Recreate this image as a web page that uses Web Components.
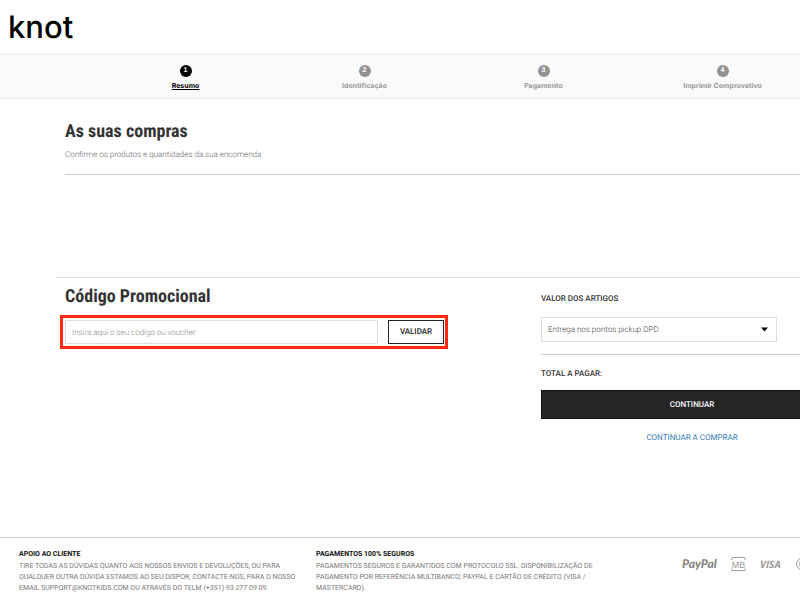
<!DOCTYPE html>
<html lang="pt">
<head>
<meta charset="utf-8">
<meta name="viewport" content="width=device-width, initial-scale=1">
<title>knot - Resumo</title>
<style>
html { overflow-x: hidden; }
body { margin: 0; background: #fff; color: #333; font-family: Roboto, "Liberation Sans", sans-serif; text-rendering: geometricPrecision; overflow: hidden; }
</style>
</head>
<body>
<checkout-page></checkout-page>

<script>
const define = (name, html, setup) => {
  const template = document.createElement('template');
  template.innerHTML = '<style>*{box-sizing:border-box}h1,h2,h3,p{margin:0}input,button,select{text-rendering:inherit}:host{display:block}</style>' + html;
  customElements.define(name, class extends HTMLElement {
    constructor() {
      super();
      this.attachShadow({ mode: 'open' }).append(template.content.cloneNode(true));
    }
    connectedCallback() { if (setup) setup(this, this.shadowRoot); }
  });
};

define('brand-header', `
<style>
:host { height: 54px; padding: 9px 8px; }
a { display: block; width: max-content; color: #000; text-decoration: none; font: 500 31px/38px Inter, sans-serif; }
</style>
<a href="#" aria-label="knot">knot</a>`);

define('progress-step', `
<style>
:host { text-align: center; color: #999; position: relative; }
:host([active]) { color: #000; }
.dot { display: block; width: 12px; height: 12px; margin: 0 auto; border-radius: 50%; background: #929292; color: #fff; font: 700 7px/12px "Liberation Sans", sans-serif; }
:host([active]) .dot { background: #000; }
.label { display: block; margin-top: 4px; font: 700 7px/10px Inter, sans-serif; white-space: nowrap; }
:host([active]) .label { text-decoration: underline; }
:host(:not([last]))::after { content: ""; position: absolute; top: 4px; left: calc(50% + 14px); width: calc(100% - 28px); height: 1px; background: #fff; }
</style>
<span class="dot"></span><span class="label"><slot></slot></span>`,
(el, root) => { root.querySelector('.dot').textContent = el.getAttribute('number'); });

define('progress-steps', `
<style>
:host { background: #fafafa; border: solid #ebebeb; border-width: 1px 0; padding: 10px 96px 7px; display: grid; grid-template-columns: repeat(4, 1fr); }
</style>
<slot></slot>`);

define('page-title', `
<style>
:host { padding-bottom: 12px; border-bottom: 1px solid #ccc; }
h1 { font: 700 18px/24px "Roboto Condensed", Roboto, sans-serif; color: #333; }
p { margin-top: 4px; font: 300 8px/14px Roboto, sans-serif; color: #666; }
</style>
<h1><slot></slot></h1><p><slot name="note"></slot></p>`);

define('promo-form', `
<style>
h2 { font: 700 18px/24px "Roboto Condensed", Roboto, sans-serif; color: #333; }
form { margin: 6px -3px 0 -5px; border: 3px solid #ff2a0c; padding: 2px 1px 2px 2px; display: flex; gap: 10px; }
input { flex: 1; min-width: 0; height: 24px; padding: 0 6px; border: 1px solid #ddd; border-radius: 0; background: #fff; color: #333; font: 300 8px/12px Roboto, sans-serif; outline: 0; }
input::placeholder { color: #888; opacity: 1; }
button { width: 56px; height: 24px; padding: 0; border: 1px solid #222; border-radius: 0; background: #fff; color: #222; font: 500 8px/12px Roboto, sans-serif; }
</style>
<h2><slot></slot></h2>
<form onsubmit="return false">
  <input type="text" aria-label="Código promocional" placeholder="Insira aqui o seu código ou voucher">
  <button type="submit">VALIDAR</button>
</form>`);

define('order-summary', `
<style>
:host { color: #333; font: 500 8px/12px Roboto, sans-serif; }
label, p { display: block; }
.picker { position: relative; width: 78%; margin-top: 12px; }
select { appearance: none; display: block; width: 100%; height: 25px; padding: 0 24px 0 6px; border: 1px solid #ddd; border-radius: 0; background: #fff; color: #444; font: 300 8px/12px Roboto, sans-serif; }
svg { position: absolute; right: 9px; top: 10px; pointer-events: none; }
hr { margin: 12px 0 13px; border: 0; border-top: 1px solid #ccc; }
button { display: block; width: 100%; height: 29px; margin-top: 10px; border: 1px solid #111; background: #252525; color: #fff; font: 500 8px/12px Roboto, sans-serif; }
a { display: block; width: max-content; margin: 13px auto 0; color: #337ab7; text-decoration: none; font: 400 8px/12px Roboto, sans-serif; }
</style>
<label for="delivery">VALOR DOS ARTIGOS</label>
<div class="picker">
  <select id="delivery"><option>Entrega nos pontos pickup DPD</option></select>
  <svg width="7" height="5" viewBox="0 0 7 5" aria-hidden="true"><path d="M0 .5h7L3.5 4.5z"/></svg>
</div>
<hr>
<p>TOTAL A PAGAR:</p>
<button type="button">CONTINUAR</button>
<a href="#">CONTINUAR A COMPRAR</a>`);

define('footer-note', `
<style>
h3 { font: 700 7px/10px Roboto, sans-serif; color: #111; }
p { margin-top: 2px; font: 400 7px/11px Roboto, sans-serif; color: #777; white-space: nowrap; }
</style>
<h3><slot name="heading"></slot></h3><p><slot></slot></p>`);

define('payment-logos', `
<style>
:host { display: flex; align-items: center; color: #999; }
svg { display: block; flex: none; fill: currentColor; overflow: visible; }
text { font-family: "Open Sans", sans-serif; font-style: italic; font-weight: 700; }
.pp { margin-right: 14px; color: #858585; }
.mb { margin-right: 14px; }
.visa { margin-right: 13px; }
</style>
<svg class="pp" width="35" height="16" viewBox="0 0 35 16" role="img" aria-label="PayPal"><text x="0" y="12" font-size="12" style="font-family:Lato,sans-serif;font-weight:900">PayPal</text></svg>
<svg class="mb" width="15" height="16" viewBox="0 0 15 16" role="img" aria-label="Multibanco">
  <path d="M.7 4V2.7Q.7 1.5 2 1.5h11q1.300 0 1.300 1.200V4M.7 12.500v.8q0 1.200 1.300 1.200h11q1.300 0 1.300-1.200v-.8" fill="none" stroke="currentColor"/>
  <text x="7.500" y="11.500" text-anchor="middle" font-size="9" style="font-family:'Liberation Sans',sans-serif;font-style:normal;font-weight:400">MB</text></svg>
<svg class="visa" width="23" height="16" viewBox="0 0 23 16" role="img" aria-label="Visa"><text x="0" y="12" font-size="10">VISA</text></svg>
<svg width="24" height="16" viewBox="0 0 24 16" role="img" aria-label="Mastercard"><g fill="none" stroke="currentColor"><circle cx="6" cy="8" r="5.500"/><circle cx="14" cy="8" r="5.500"/><path d="M3 6h6M3 8h6M3 10h6"/></g></svg>`);

define('page-footer', `
<style>
:host { display: grid; grid-template-columns: minmax(0, 258fr) minmax(0, 258fr) minmax(0, 295fr); column-gap: 39px; padding: 11px 0 6px 19px; border-top: 1px solid #ccc; align-items: start; }
payment-logos { margin-top: 7px; padding-left: 69px; }
</style>
<footer-note><span slot="heading">APOIO AO CLIENTE</span>TIRE TODAS AS DÚVIDAS QUANTO AOS NOSSOS ENVIOS E DEVOLUÇÕES, OU PARA<br>QUALQUER OUTRA DÚVIDA ESTAMOS AO SEU DISPOR, CONTACTE-NOS, PARA O NOSSO<br>EMAIL SUPPORT@KNOTKIDS.COM OU ATRAVÉS DO TELM (+351) 93 277 09 09.</footer-note>
<footer-note><span slot="heading">PAGAMENTOS 100% SEGUROS</span>PAGAMENTOS SEGUROS E GARANTIDOS COM PROTOCOLO SSL. DISPONIBILIZAÇÃO DE<br>PAGAMENTO POR REFERÊNCIA MULTIBANCO; PAYPAL E CARTÃO DE CRÉDITO (VISA /<br>MASTERCARD).</footer-note>
<payment-logos></payment-logos>`);

define('checkout-page', `
<style>
:host { display: flex; flex-direction: column; width: 113.5%; min-height: 100vh; }
main { flex: 1; padding: 21px 65px 24px; }
.order { display: grid; grid-template-columns: 380fr 302fr; column-gap: 96px; margin: 102px 0 0 -10px; padding: 7px 0 0 10px; border-top: 1px solid #ddd; align-items: start; }
order-summary { margin-top: 8px; }
</style>
<brand-header></brand-header>
<progress-steps>
  <progress-step number="1" active>Resumo</progress-step>
  <progress-step number="2">Identificação</progress-step>
  <progress-step number="3">Pagamento</progress-step>
  <progress-step number="4" last>Imprimir Comprovativo</progress-step>
</progress-steps>
<main>
  <page-title>As suas compras<span slot="note">Confirme os produtos e quantidades da sua encomenda</span></page-title>
  <div class="order">
    <promo-form>Código Promocional</promo-form>
    <order-summary></order-summary>
  </div>
</main>
<page-footer></page-footer>`);
</script>
</body>
</html>
